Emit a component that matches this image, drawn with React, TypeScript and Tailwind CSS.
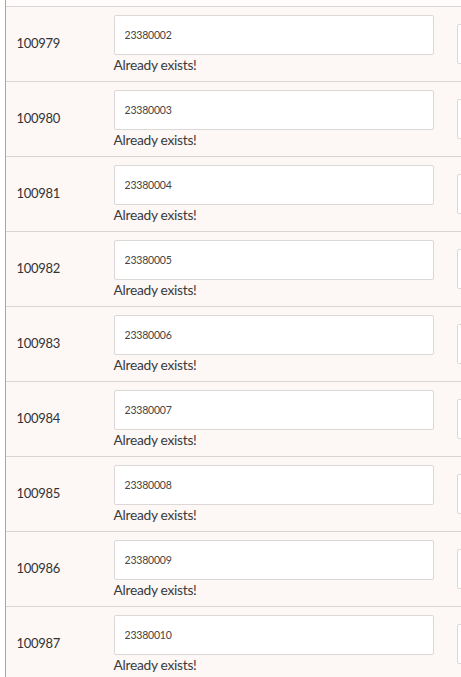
import React from "react";

const rows = [
  ["100979", "23380002"],
  ["100980", "23380003"],
  ["100981", "23380004"],
  ["100982", "23380005"],
  ["100983", "23380006"],
  ["100984", "23380007"],
  ["100985", "23380008"],
  ["100986", "23380009"],
  ["100987", "23380010"],
];

const App = () => {
  return (
    <div className="w-[461px] h-[677px] overflow-hidden bg-white font-['Lato',sans-serif] text-[#333]">
      <div className="ml-[5px] border-l-[1.5px] border-[#a9a6a6] h-full">
        <div className="h-[6px] bg-[#fffcfb]"></div>
        {rows.map(([id, code]) => (
          <div
            key={id}
            className="flex items-center h-[75px] border-t border-[#d9d5d4] bg-[#fdf7f6]"
          >
            <div className="w-[107.5px] shrink-0 pl-[10.5px] text-[13px] tracking-[-0.3px]">{id}</div>
            <div className="flex flex-col w-[320px] shrink-0 pt-[1px]">
              <input
                readOnly
                value={code}
                className="h-[40px] w-full bg-white border border-[#dcd8d8] rounded-[2px] pl-[10px] text-[10.5px] text-[#444] tracking-[-0.2px] outline-none"
              />
              <div className="h-[20px] leading-[20px] text-[13.8px] tracking-[-0.3px] text-[#3a3a3a]">
                Already exists!
              </div>
            </div>
            <div className="ml-[23px] h-[40px] w-[40px] bg-white border border-[#dcd8d8] rounded-[2px] shrink-0"></div>
          </div>
        ))}
      </div>
    </div>
  );
};

export default App;
